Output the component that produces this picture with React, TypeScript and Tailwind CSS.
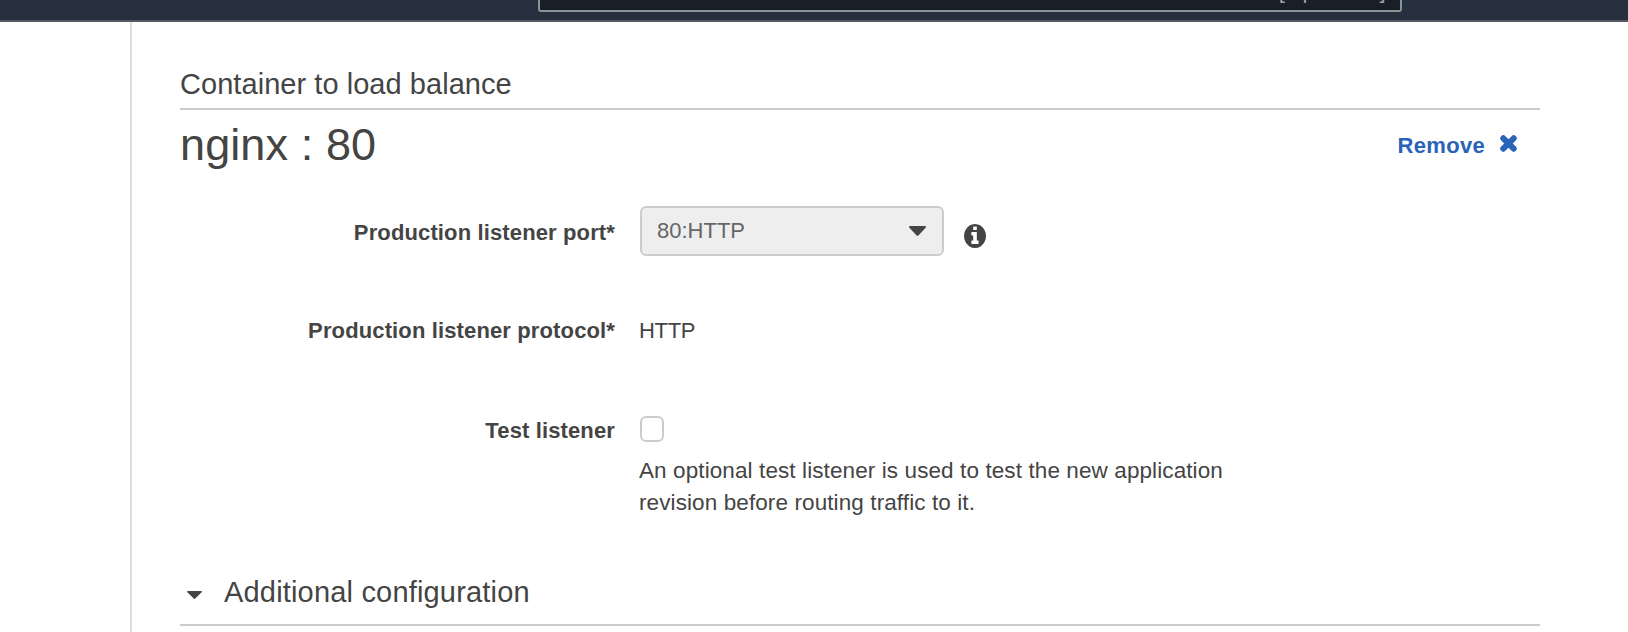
import React from 'react';

function Caret({ className }: { className: string }) {
  return (
    <svg className={className} viewBox="0 0 18 10" preserveAspectRatio="none" fill="currentColor">
      <path d="M1.2 0h15.6c1 0 1.500 1 .8 1.700L9.900 9.500c-.5.6-1.300.6-1.800 0L.4 1.700C-.3 1 .2 0 1.200 0z" />
    </svg>
  );
}

function InfoIcon() {
  return (
    <svg className="h-6 w-[22px] shrink-0" viewBox="128 128 1536 1536" preserveAspectRatio="none" fill="currentColor">
      <path d="M1152 1376v-160q0-14-9-23t-23-9h-96V672q0-14-9-23t-23-9H672q-14 0-23 9t-9 23v160q0 14 9 23t23 9h96v320h-96q-14 0-23 9t-9 23v160q0 14 9 23t23 9h448q14 0 23-9t9-23zM1024 480V320q0-14-9-23t-23-9H800q-14 0-23 9t-9 23v160q0 14 9 23t23 9h192q14 0 23-9t9-23zM1664 896q0 209-103 385.5T1281.5 1561 896 1664t-385.5-103T231 1281.500 128 896t103-385.500T510.500 231 896 128t385.500 103T1561 510.500 1664 896z" />
    </svg>
  );
}

function RemoveIcon() {
  return (
    <svg className="mt-0.5 h-[17px] w-[17px]" viewBox="0 0 17 17" stroke="currentColor" strokeWidth="6" strokeLinecap="round">
      <path d="M3.300 3.300l10.400 10.400M13.700 3.300L3.300 13.700" />
    </svg>
  );
}

function Label({ children }: { children: React.ReactNode }) {
  return (
    <div className="w-[435px] shrink-0 text-right text-[22px] leading-[25px] font-bold tracking-[0.13px]">
      {children}
    </div>
  );
}

export default function App() {
  return (
    <div className="flex h-[632px] w-[1628px] flex-col overflow-hidden bg-white font-['Liberation_Sans',Arial,sans-serif] text-[#444444]">
      <header className="flex h-[22px] shrink-0 items-start border-b-2 border-[#545b64] bg-[#252f3e] pl-[538px]">
        <div className="flex h-3 w-[864px] items-end justify-end overflow-hidden rounded-b-[3px] border-2 border-t-0 border-[#879596] bg-[#1a1f27] pr-[14px] pb-[7px]">
          <span className="text-[22px] leading-[25px] tracking-[0.28px] text-[#95a5a6]">[Option+S]</span>
        </div>
      </header>
      <main className="flex flex-1 pl-[130px]">
        <div className="w-[1412px] border-l-2 border-[#dddddd] pl-12">
          <section className="w-[1360px]">
            <h2 className="mt-[46px] border-b-2 border-[#cccccc] pb-2 text-[29px] leading-8 tracking-[0.05px]">
              Container to load balance
            </h2>
            <div className="mt-[9px] flex h-[52px] justify-between pr-[23px]">
              <h1 className="text-[45px] leading-[52px] tracking-[0.1px]">nginx : 80</h1>
              <button className="mt-[14px] flex h-[25px] items-start gap-[15px] text-[22px] leading-[25px] font-bold tracking-[0.3px] text-[#2a64b8]">
                Remove
                <RemoveIcon />
              </button>
            </div>

            <div className="mt-[35px] flex h-[50px] gap-[25px]">
              <div className="pt-[14px]">
                <Label>Production listener port*</Label>
              </div>
              <div className="flex items-start gap-5">
                <div className="flex h-[50px] w-[304px] justify-between rounded-md border-2 border-[#cccccc] bg-[#eeeeee] pt-[10px] pr-4 pl-[15px]">
                  <span className="text-[22px] leading-[25px] text-[#666666]">80:HTTP</span>
                  <Caret className="mt-2 h-[10px] w-[17px]" />
                </div>
                <div className="pt-[18px]">
                  <InfoIcon />
                </div>
              </div>
            </div>

            <div className="mt-[62px] flex gap-6">
              <Label>Production listener protocol*</Label>
              <span className="text-[22px] leading-[25px] tracking-[-0.35px]">HTTP</span>
            </div>

            <div className="mt-[73px] flex gap-6">
              <div className="pt-0.5">
                <Label>Test listener</Label>
              </div>
              <div>
                <div className="ml-px h-[26px] w-6 rounded-md border-2 border-[#cccccc] bg-white" />
                <p className="mt-[13px] text-[22.5px] leading-8 tracking-[0.1px] whitespace-nowrap">
                  An optional test listener is used to test the new application
                  <br />
                  revision before routing traffic to it.
                </p>
              </div>
            </div>

            <div className="mt-[57px] flex border-b-2 border-[#cccccc] pb-4 pl-[7px]">
              <Caret className="mt-[15px] mr-[22px] h-2 w-[15px]" />
              <h2 className="text-[29px] leading-8 tracking-[0.18px]">Additional configuration</h2>
            </div>
          </section>
        </div>
      </main>
    </div>
  );
}
